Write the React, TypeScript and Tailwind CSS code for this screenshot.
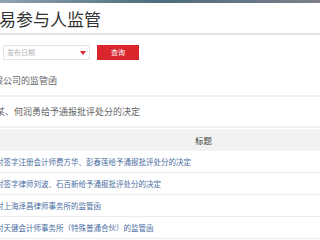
export default function App() {
  const notices = [
    '对某某有限公司的监管函',
    '对某某、何润勇给予通报批评处分的决定',
  ]

  const rows = [
    '对签字注册会计师费方华、彭春莲给予通报批评处分的决定',
    '对签字律师刘波、石百新给予通报批评处分的决定',
    '对上海泽昌律师事务所的监管函',
    '对天健会计师事务所（特殊普通合伙）的监管函',
  ]

  return (
    <div className="w-[320px] h-[240px] overflow-hidden bg-white font-['Noto_Sans_CJK_SC','Noto_Sans',sans-serif]">
      {/* BANNER EDGE */}
      <div className="h-[3px] bg-gradient-to-r from-[#8fa3ae] via-[#4c6b7c] to-[#7d808c]" />

      {/* TITLE */}
      <div className="h-[32px] flex items-center border-b-2 border-[#e2e2e2]">
        <h1 className="-ml-[1px] text-[17px] leading-none text-[#333] whitespace-nowrap">
          易参与人监管
        </h1>
      </div>

      {/* FILTER */}
      <div className="mt-[10px] flex items-center">
        <div className="ml-[3px] w-[87px] h-[15px] border border-[#e4e4e4] bg-white flex items-center justify-between px-[3px]">
          <span className="text-[7px] leading-none text-[#b5b5b5]">发布日期</span>
          <span className="w-0 h-0 border-l-[3px] border-r-[3px] border-t-[4px] border-l-transparent border-r-transparent border-t-[#d9262c]" />
        </div>
        <button className="ml-[7px] w-[42px] h-[15px] bg-[#d9262c] text-white text-[7px] leading-none flex items-center justify-center">
          查询
        </button>
      </div>

      {/* NOTICES */}
      <div className="mt-[6px]">
        {notices.map((n, i) => (
          <div
            key={i}
            className="h-[31px] border-b-2 border-[#efefef] flex items-center overflow-hidden"
          >
            <span
              className={`text-[9px] leading-none text-[#666] whitespace-nowrap ${
                i === 0 ? '-ml-[42px]' : '-ml-[22px]'
              }`}
            >
              {n}
            </span>
          </div>
        ))}
      </div>

      {/* TABLE */}
      <div className="mt-[1px]">
        <div className="h-[22px] bg-[#f2f2f2] flex items-center">
          <span className="ml-[195px] text-[8.5px] leading-none text-[#444]">标题</span>
        </div>
        {rows.map((r) => (
          <div
            key={r}
            className="h-[22px] border-b border-[#ededed] flex items-center overflow-hidden"
          >
            <span className="-ml-[4px] text-[7.5px] leading-none text-[#4a6e9f] whitespace-nowrap">
              {r}
            </span>
          </div>
        ))}
      </div>
    </div>
  )
}
